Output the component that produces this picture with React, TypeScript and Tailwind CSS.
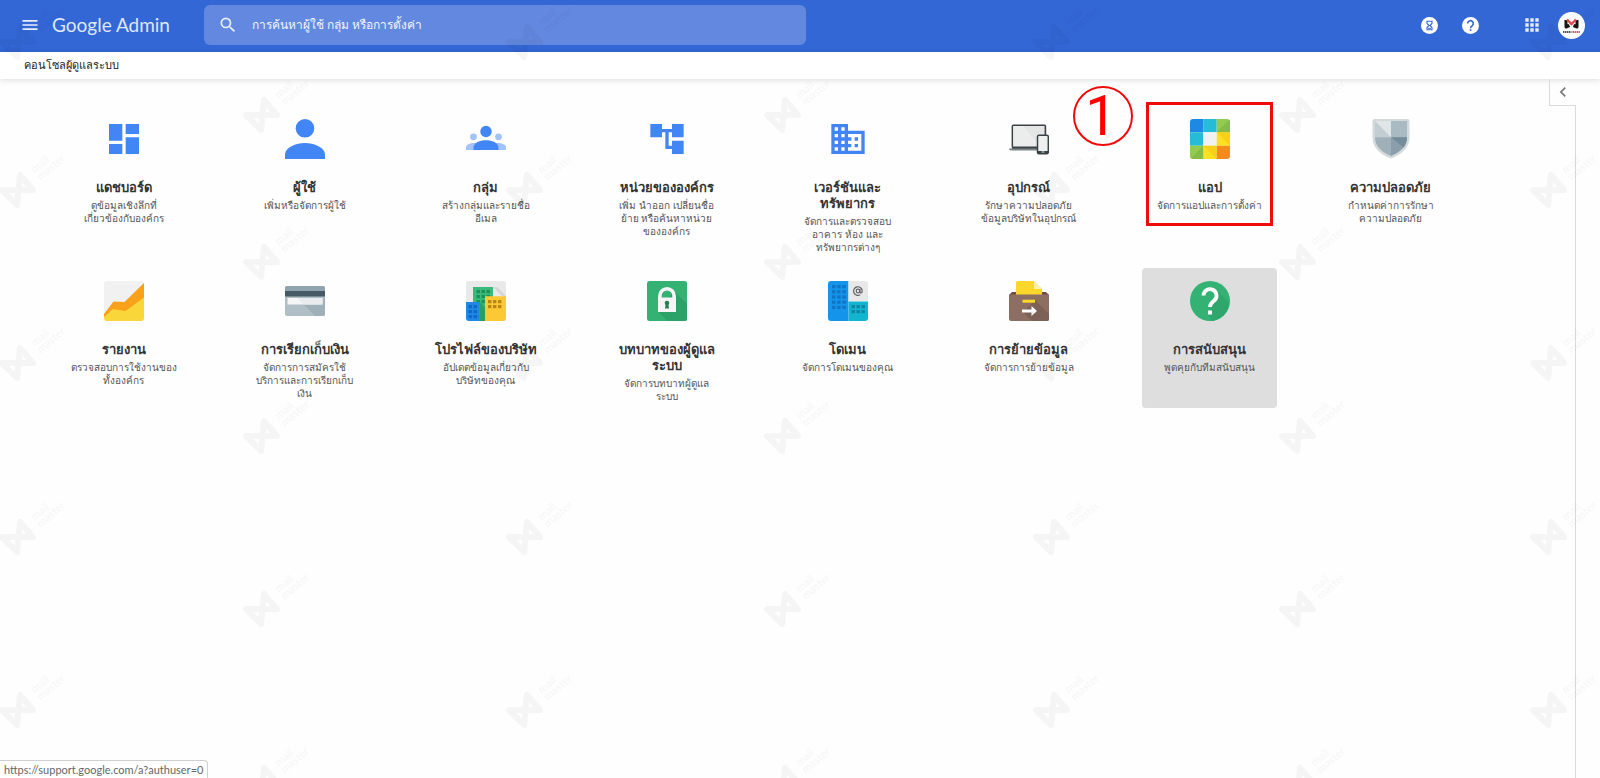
import React from 'react';
import { MdAccountTree, MdApps, MdChevronLeft, MdDashboard, MdDomain, MdMenu, MdSearch } from 'react-icons/md';

type Tile = {
  title: string[];
  text: string[];
  icon: React.ReactNode;
  active?: boolean;
  step?: number;
};

// Small windows drawn on the building icons
const Windows = ({ x, y, cols, rows, fill, gap = 4 }: { x: number; y: number; cols: number; rows: number; fill: string; gap?: number }) => (
  <g fill={fill}>
    {Array.from({ length: cols * rows }, (_, i) => (
      <rect key={i} x={x + (i % cols) * gap} y={y + Math.floor(i / cols) * gap} width="3.4" height="3.2" />
    ))}
  </g>
);

const UserIcon = () => (
  <svg width="40" height="40" viewBox="0 0 40 40" fill="#4285f4">
    <circle cx="20" cy="9.3" r="9.3" />
    <path d="M0 40v-4.500C0 28.500 11 24 20 24s20 4.500 20 11.500V40z" />
  </svg>
);

const GroupsIcon = () => (
  <svg width="40" height="40" viewBox="0 0 40 40">
    <g fill="#a1c2fa">
      <circle cx="7.500" cy="17.800" r="3.400" />
      <circle cx="32.500" cy="17.800" r="3.400" />
      <path d="M0 31v-2.500C0 25.500 4 24 8 24h24c4 0 8 1.500 8 4.500V31z" />
    </g>
    <circle cx="20" cy="12.500" r="5.700" fill="#4285f4" />
    <path d="M7.500 31v-2.500c0-4.800 6.500-7.300 12.500-7.300s12.500 2.500 12.500 7.300V31z" fill="#4285f4" />
  </svg>
);

const DevicesIcon = () => (
  <svg width="40" height="40" viewBox="0 0 40 40">
    <rect x="3.400" y="6.200" width="33" height="22.500" rx="1" fill="#e4e5e5" stroke="#3b4246" strokeWidth="1.600" />
    <path d="M4.200 7h10L32 28H4.200z" fill="#ececec" />
    <path d="M3 27.500h27V30H3z" fill="#3b4246" />
    <path d="M0 29.500h30v2H3c-2 0-3-.5-3-2z" fill="#7d8589" />
    <rect x="28.500" y="16.200" width="10.800" height="18.500" rx="1.500" fill="#eef0f0" stroke="#3b4246" strokeWidth="1.500" />
    <path d="M28.500 32h10.800v1.500a1.200 1.200 0 0 1-1.200 1.200h-8.400a1.200 1.200 0 0 1-1.200-1.200z" fill="#3b4246" />
    <path d="M32.500 33h3" stroke="#cfd8dc" strokeWidth="1" />
  </svg>
);

const AppsIcon = () => (
  <svg width="40" height="40" viewBox="0 0 40 40">
    <clipPath id="apps-clip"><rect width="40" height="40" rx="3" /></clipPath>
    <g clipPath="url(#apps-clip)">
      <path d="M0 0h13.300v13.300H0z" fill="#1e88e5" />
      <path d="M13.300 0h13.400v13.300H13.300zM0 13.300h13.300v13.400H0z" fill="#26bcd5" />
      <path d="M26.700 0H40v13.300H26.700zM0 26.700h13.300V40H0z" fill="#92cb4e" />
      <path d="M13.300 13.300h13.400v13.400H13.300z" fill="#f1f1f1" />
      <path d="M26.700 13.300H40v13.400H26.700zM13.300 26.700h13.400V40H13.300z" fill="#fbe220" />
      <path d="M26.700 26.700H40V40H26.700z" fill="#f48b1c" />
      <path d="M26.700 13.300L40 0v13.300zM0 40l13.300-13.300V40z" fill="#7cb342" opacity=".6" />
      <path d="M26.700 13.300L40 26.700V13.300zM13.300 26.700L26.700 40V26.700z" fill="#f5c518" opacity=".6" />
    </g>
  </svg>
);

const ShieldIcon = () => (
  <svg width="40" height="40" viewBox="0 0 40 40">
    <path d="M3.500 0h33a2 2 0 0 1 2 2v17c0 9-7 16-18.500 20.500C8.500 35 1.500 28 1.500 19V2a2 2 0 0 1 2-2z" fill="#d3d8da" />
    <path d="M4 2h16v16.300H4z" fill="#c3ced3" />
    <path d="M4 2l16 16.300V2z" fill="#e0e5e7" />
    <path d="M20 2h16v16.300H20z" fill="#a9bac3" />
    <path d="M4 18.300h16V37C10 33 4 27 4 18.300z" fill="#9fb0b9" />
    <path d="M20 18.300h16C36 27 30 33 20 37z" fill="#8a9fab" />
    <path d="M20 18.300h16c0 4-1.300 7.400-3.500 10.200z" fill="#758d9a" />
  </svg>
);

const ReportsIcon = () => (
  <svg width="40" height="40" viewBox="0 0 40 40">
    <rect width="40" height="40" rx="3" fill="#f1f1f1" />
    <path d="M0 34l9-9 12 3 19-15v24a3 3 0 0 1-3 3H3a3 3 0 0 1-3-3z" fill="#f9d73b" />
    <path d="M0 33l9.500-12.500 11 .5L40 2v14.500L21.500 30 9 28 0 36z" fill="#f9a11b" />
  </svg>
);

const BillingIcon = () => (
  <svg width="40" height="40" viewBox="0 0 40 40">
    <rect y="5" width="40" height="30" rx="2" fill="#b0bec5" />
    <path d="M12 17l18 18h8a2 2 0 0 0 2-2V17z" fill="#9fb0b9" />
    <path d="M0 7a2 2 0 0 1 2-2h36a2 2 0 0 1 2 2v3.500H0z" fill="#90a4ae" />
    <path d="M0 10h40v5.500H0z" fill="#455a64" />
    <path d="M2.500 17h35v6.500h-35z" fill="#f5f5f5" />
    <path d="M12 17h25.500v6.500h-19z" fill="#e8ecee" />
  </svg>
);

const CompanyIcon = () => (
  <svg width="40" height="40" viewBox="0 0 40 40">
    <rect width="40" height="40" rx="3" fill="#e9e9e9" />
    <path d="M27 6l13 13v-4L31 6z" fill="#d5d5d5" />
    <path d="M7 6h20v34H7z" fill="#3cba7c" />
    <Windows x={10.500} y={9} cols={3} rows={3} gap={5} fill="#1f8f58" />
    <path d="M13.500 21l5.500 5v14h-5.500z" fill="#2b9e68" />
    <path d="M19 15.300h21V37a3 3 0 0 1-3 3H19z" fill="#fcc934" />
    <Windows x={22} y={19} cols={3} rows={2} gap={5} fill="#b9841a" />
    <path d="M0 21h13.500v19H3a3 3 0 0 1-3-3z" fill="#1e88e5" />
    <Windows x={2.500} y={24} cols={2} rows={3} gap={5} fill="#1667bf" />
  </svg>
);

const RolesIcon = () => (
  <svg width="40" height="40" viewBox="0 0 40 40">
    <rect width="40" height="40" rx="2.500" fill="#34b274" />
    <path d="M27 10l13 13v14.500a2.500 2.500 0 0 1-2.500 2.500H20.500L11.500 31z" fill="#2ba268" />
    <path d="M12.900 18v-3.200a7.100 7.100 0 0 1 14.200 0V18" fill="none" stroke="#f5f5f5" strokeWidth="3.600" />
    <path d="M11 16.500h18V31H11z" fill="#f5f5f5" />
    <circle cx="20" cy="22" r="2.300" fill="#23804f" />
    <path d="M18.800 22.500h2.400l.8 5h-4z" fill="#23804f" />
  </svg>
);

const DomainsIcon = () => (
  <svg width="40" height="40" viewBox="0 0 40 40">
    <path d="M3 0h17.500v40H3a3 3 0 0 1-3-3V3a3 3 0 0 1 3-3z" fill="#1494ea" />
    <Windows x={4} y={4} cols={3} rows={5} gap={5.200} fill="#1275c4" />
    <path d="M20.500 0H37a3 3 0 0 1 3 3v17.500H20.500z" fill="#e8e8e8" />
    <path d="M20.500 20.500H40V37a3 3 0 0 1-3 3H20.500z" fill="#12b5cf" />
    <Windows x={23.500} y={24} cols={3} rows={2} gap={5} fill="#0c86a3" />
    <circle cx="30" cy="10" r="1.800" fill="none" stroke="#5f6368" strokeWidth="1.200" />
    <path d="M31.900 8v2.900c0 1.600 2.300 1.500 2.300-1a4.300 4.300 0 1 0-2 3.800" fill="none" stroke="#5f6368" strokeWidth="1.200" />
  </svg>
);

const MigrationIcon = () => (
  <svg width="40" height="40" viewBox="0 0 40 40">
    <path d="M7 1.500A1.500 1.500 0 0 1 8.500 0H25l8 8v6H7z" fill="#fbd72b" />
    <path d="M25 0l8 8h-8z" fill="#fdf0a8" />
    <path d="M3 11h4v3H0zM33 11h4l3 3h-7z" fill="#6d4c41" />
    <path d="M0 13.500h40V38a2 2 0 0 1-2 2H2a2 2 0 0 1-2-2z" fill="#8d6e63" />
    <path d="M26 19l14 14v5a2 2 0 0 1-2 2H23l-9-9z" fill="#7d6056" />
    <rect x="13.500" y="18.700" width="12.500" height="3" fill="#fbd72b" />
    <path d="M13 28.500h9.500v-3.500l5.500 5-5.500 5v-3.500H13z" fill="#fff" />
  </svg>
);

const SupportIcon = () => (
  <svg width="40" height="40" viewBox="0 0 40 40">
    <circle cx="20" cy="20" r="20" fill="#34b274" />
    <path d="M26 9l13 13a20 20 0 0 1-17 18l-4-6z" fill="#2fa66b" />
    <path d="M13.500 14.500a6.500 6.500 0 1 1 10.800 5c-2.400 2-4.300 3-4.300 6.500" fill="none" stroke="#fff" strokeWidth="3.800" />
    <rect x="18" y="29.500" width="4" height="4" fill="#fff" />
  </svg>
);

const tiles: Tile[] = [
  { title: ['แดชบอร์ด'], text: ['ดูข้อมูลเชิงลึกที่', 'เกี่ยวข้องกับองค์กร'], icon: <MdDashboard size={40} color="#4285f4" /> },
  { title: ['ผู้ใช้'], text: ['เพิ่มหรือจัดการผู้ใช้'], icon: <UserIcon /> },
  { title: ['กลุ่ม'], text: ['สร้างกลุ่มและรายชื่อ', 'อีเมล'], icon: <GroupsIcon /> },
  { title: ['หน่วยขององค์กร'], text: ['เพิ่ม นำออก เปลี่ยนชื่อ', 'ย้าย หรือค้นหาหน่วย', 'ขององค์กร'], icon: <MdAccountTree size={40} color="#4285f4" /> },
  { title: ['เวอร์ชันและ', 'ทรัพยากร'], text: ['จัดการและตรวจสอบ', 'อาคาร ห้อง และ', 'ทรัพยากรต่างๆ'], icon: <MdDomain size={40} color="#4285f4" /> },
  { title: ['อุปกรณ์'], text: ['รักษาความปลอดภัย', 'ข้อมูลบริษัทในอุปกรณ์'], icon: <DevicesIcon /> },
  { title: ['แอป'], text: ['จัดการแอปและการตั้งค่า'], icon: <AppsIcon />, step: 1 },
  { title: ['ความปลอดภัย'], text: ['กำหนดค่าการรักษา', 'ความปลอดภัย'], icon: <ShieldIcon /> },
  { title: ['รายงาน'], text: ['ตรวจสอบการใช้งานของ', 'ทั้งองค์กร'], icon: <ReportsIcon /> },
  { title: ['การเรียกเก็บเงิน'], text: ['จัดการการสมัครใช้', 'บริการและการเรียกเก็บ', 'เงิน'], icon: <BillingIcon /> },
  { title: ['โปรไฟล์ของบริษัท'], text: ['อัปเดตข้อมูลเกี่ยวกับ', 'บริษัทของคุณ'], icon: <CompanyIcon /> },
  { title: ['บทบาทของผู้ดูแล', 'ระบบ'], text: ['จัดการบทบาทผู้ดูแล', 'ระบบ'], icon: <RolesIcon /> },
  { title: ['โดเมน'], text: ['จัดการโดเมนของคุณ'], icon: <DomainsIcon /> },
  { title: ['การย้ายข้อมูล'], text: ['จัดการการย้ายข้อมูล'], icon: <MigrationIcon /> },
  { title: ['การสนับสนุน'], text: ['พูดคุยกับทีมสนับสนุน'], icon: <SupportIcon />, active: true },
];

const TileCard = ({ tile }: { tile: Tile }) => (
  <li className="relative flex justify-center pb-[9px]">
    <a
      href="#"
      className={`flex w-[135px] flex-col items-center rounded-sm pt-[13px] pb-[5px] text-center whitespace-nowrap ${tile.active ? 'bg-[#dedede]' : ''}`}
    >
      {tile.icon}
      <span className="mt-5 text-[13px] leading-4 font-bold text-[#333]">
        {tile.title.map(line => <span key={line} className="block">{line}</span>)}
      </span>
      <span className="mt-1 text-[10px] leading-[13px] text-[#555]">
        {tile.text.map(line => <span key={line} className="block">{line}</span>)}
      </span>
    </a>
    {tile.step && (
      <>
        <div className="absolute -top-1 left-[27px] h-[124px] w-[127px] border-3 border-[#f00b0b]" />
        <div className="absolute -top-5 -left-[46px] flex size-[60px] items-center justify-center rounded-full border-2 border-[#f00b0b] pr-1 font-['Roboto',sans-serif] text-[56px] leading-none text-[#ff0000]">
          {tile.step}
        </div>
      </>
    )}
  </li>
);

const evenRows = [42, 190, 363, 537, 710];
const oddRows = [115, 262, 436, 609, 783];
const watermarks = [
  ...[18, 525, 1052, 1549].flatMap(x => evenRows.map(y => ({ x, y }))),
  ...[262, 783, 1298].flatMap(x => oddRows.map(y => ({ x, y }))),
];

const Watermark = ({ x, y }: { x: number; y: number }) => (
  <svg className="absolute" style={{ left: x - 20, top: y - 42 }} width="72" height="64" viewBox="0 0 72 64">
    <path d="M4 42h31L22 27l-3 30z" fill="none" stroke="#000" strokeWidth="6" strokeLinejoin="round" />
    <g transform="translate(20 40) rotate(-40)" fill="#000" fontFamily="Lato, sans-serif" fontSize="11">
      <text x="22" y="0">mail</text>
      <text x="22" y="9">master</text>
    </g>
  </svg>
);

export default function App() {
  return (
    <div className="relative flex min-h-screen flex-col overflow-hidden bg-[#fefefe] font-['Noto_Sans','DejaVu_Sans',sans-serif]">
      <header className="flex h-[52px] shrink-0 items-center bg-[#3367d6] pb-0.5 text-white">
        <button aria-label="เมนู" className="ml-5 text-[#e8eefb]">
          <MdMenu size={20} />
        </button>
        <a href="#" className="ml-3 w-[152px] font-['Lato',sans-serif] text-[19px] leading-6 text-[#dfe8fa]">
          Google Admin
        </a>
        <label className="flex h-10 w-[602px] items-center rounded-md bg-[#6288df] pl-3.5">
          <MdSearch size={20} className="text-[#e8eefb]" />
          <input
            type="text"
            aria-label="ค้นหา"
            placeholder="การค้นหาผู้ใช้ กลุ่ม หรือการตั้งค่า"
            className="ml-3.5 flex-1 bg-transparent text-[12px] text-white outline-none placeholder:text-[#f1f5fd]"
          />
        </label>
        <div className="mr-[15px] ml-auto flex items-center">
          <button aria-label="งาน" className="mr-6">
            <svg width="17" height="17" viewBox="0 0 17 17">
              <circle cx="8.500" cy="8.500" r="8.500" fill="#fff" />
              <path d="M6 4.300h5v2.200L9 8.500l2 2v2.200H6v-2.200l2-2-2-2z" fill="none" stroke="#3367d6" strokeWidth="1.100" />
              <path d="M7 11.300h3" stroke="#3367d6" strokeWidth="1" />
            </svg>
          </button>
          <button aria-label="ความช่วยเหลือ" className="mr-[43px]">
            <svg width="17" height="17" viewBox="0 0 17 17">
              <circle cx="8.500" cy="8.500" r="8.500" fill="#fff" />
              <path d="M5.700 6.500a2.800 2.800 0 1 1 4.600 2.100c-1 .9-1.800 1.300-1.800 2.600" fill="none" stroke="#3367d6" strokeWidth="1.600" />
              <rect x="7.700" y="12.200" width="1.700" height="1.700" fill="#3367d6" />
            </svg>
          </button>
          <button aria-label="แอปของ Google" className="mr-4 text-[#e8eefb]">
            <MdApps size={20} />
          </button>
          <button aria-label="บัญชี">
            <svg width="27" height="27" viewBox="0 0 27 27">
              <circle cx="13.500" cy="13.500" r="13.500" fill="#fff" />
              <path d="M8 8v7l3.500-1.500M19 8v7l-3.500-1.500" fill="none" stroke="#161616" strokeWidth="3" strokeLinejoin="round" />
              <path d="M9 7.500l4.500 4.500L18 7.500" fill="none" stroke="#e4474b" strokeWidth="2.400" />
              <path d="M5 20h8.500" stroke="#222" strokeWidth="1.500" strokeDasharray="1.500 .5" />
              <path d="M14.500 20H22" stroke="#a43a3a" strokeWidth="1.500" strokeDasharray="1.500 .5" />
            </svg>
          </button>
        </div>
      </header>

      <nav className="flex h-[27px] shrink-0 items-center bg-white pl-6 text-[11px] text-[#222] shadow-[0_1px_6px_rgba(0,0,0,0.14)]">
        คอนโซลผู้ดูแลระบบ
      </nav>

      <div className="flex flex-1">
        <main className="flex-1 pt-[27px] pl-[33px]">
          <ul className="grid grid-cols-[repeat(auto-fill,181px)]">
            {tiles.map(tile => <TileCard key={tile.title[0]} tile={tile} />)}
          </ul>
        </main>
        <aside className="flex w-[51px] flex-col">
          <button aria-label="แสดงแผง" className="flex h-[27px] w-[27px] items-center justify-center border-b border-l border-[#dadada] text-[#777]">
            <MdChevronLeft size={20} />
          </button>
          <div className="ml-[26px] flex-1 border-l border-[#dadada]" />
        </aside>
      </div>

      <div className="pointer-events-none absolute inset-0 overflow-hidden opacity-[0.03]" aria-hidden="true">
        {watermarks.map(w => <Watermark key={`${w.x}-${w.y}`} x={w.x} y={w.y} />)}
      </div>

      <div className="absolute bottom-0 left-0 h-[18px] rounded-tr-sm border-t border-r border-[#d0d0d0] bg-white px-1 font-['Lato',sans-serif] text-[11px] leading-[18px] text-[#666]">
        https://support.google.com/a?authuser=0
      </div>
    </div>
  );
}
